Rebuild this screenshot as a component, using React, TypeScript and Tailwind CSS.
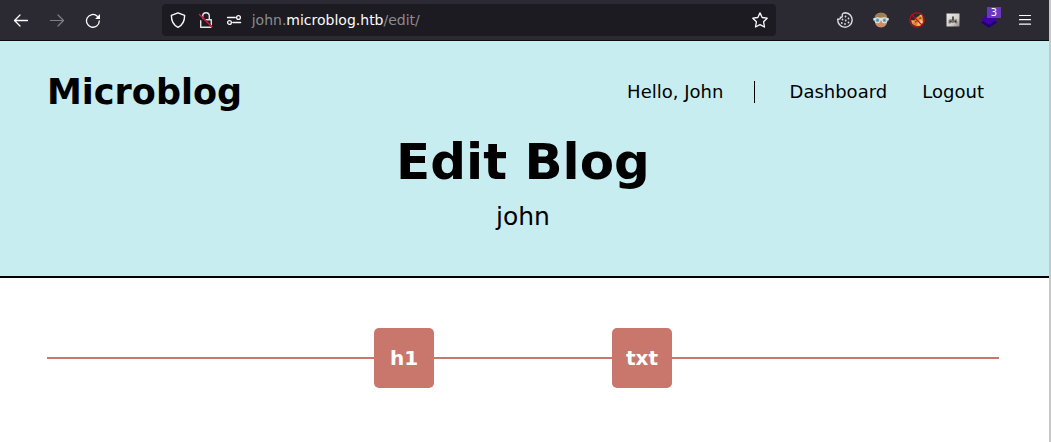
import React from "react";

function BackIcon() {
  return (
    <svg className="h-4 w-4" viewBox="0 0 16 16" fill="none" stroke="#fbfbfe" strokeWidth="1.3" strokeLinecap="round" strokeLinejoin="round">
      <path d="M14.5 8.500H1.700M7 3 1.500 8.500 7 14" />
    </svg>
  );
}

function ForwardIcon() {
  return (
    <svg className="h-4 w-4" viewBox="0 0 16 16" fill="none" stroke="#807f86" strokeWidth="1.2" strokeLinecap="round" strokeLinejoin="round">
      <path d="M1.500 8.500h12.800M9 3 14.500 8.500 9 14" />
    </svg>
  );
}

function ReloadIcon() {
  return (
    <svg className="h-4 w-4" viewBox="0 0 16 16" fill="none" stroke="#fbfbfe" strokeWidth="1.3" strokeLinecap="round">
      <path d="M14.300 9A6.400 6.400 0 1 1 12.300 4.200" />
      <path d="M15 2v4.900h-4.900z" fill="#fbfbfe" stroke="none" />
    </svg>
  );
}

function ShieldIcon() {
  return (
    <svg className="h-4 w-4" viewBox="0 0 16 16" fill="none" stroke="#fbfbfe" strokeWidth="1.4" strokeLinejoin="round">
      <path d="M8 .8 14.6 3.3C14.7 8.5 13.2 12.8 8 15.3 2.8 12.8 1.3 8.5 1.4 3.3z" />
    </svg>
  );
}

function InsecureIcon() {
  return (
    <svg className="h-4 w-4" viewBox="0 0 16 16" fill="none" strokeWidth="1.4">
      <path d="M2.700 8.200v7.100h10.600V7.700H6.500M4.700 7V4a3.300 3.300 0 0 1 6.600 0v3.700" stroke="#e4e4e9" strokeLinejoin="round" />
      <path d="M1 2 14.300 15.300" stroke="#1c1b22" strokeWidth="1.600" />
      <path d="M1 2 14.300 15.300" stroke="#e8143f" strokeWidth="1.400" />
    </svg>
  );
}

function PermissionsIcon() {
  return (
    <svg className="h-4 w-4" viewBox="0 0 16 16" fill="none" stroke="#fbfbfe" strokeWidth="1.3" strokeLinecap="round">
      <path d="M1.5 5.5h7.8M6.8 10.5h7.8" />
      <circle cx="12.5" cy="5.5" r="1.9" />
      <circle cx="3.5" cy="10.5" r="1.9" />
    </svg>
  );
}

function StarIcon() {
  return (
    <svg className="h-4 w-4" viewBox="0 0 16 16" fill="none" stroke="#fbfbfe" strokeWidth="1.3" strokeLinejoin="round">
      <path d="m8 .9 2.2 4.6 5 .7-3.6 3.6.9 5.2L8 12.6 3.5 15l.9-5.2L.8 6.2l5-.7z" />
    </svg>
  );
}

function CookieIcon() {
  return (
    <svg className="h-4 w-4" viewBox="0 0 16 16">
      <path d="M8.500.8A7.200 7.200 0 1 1 .8 7.200c1.600.3 2.800-.3 2.700-1.900C5.100 5.500 5.700 4.400 5.200 3.200 5.100 1.900 6.200.9 8.500.8z" fill="none" stroke="#dcdce0" strokeWidth="1.400" />
      <g fill="#dcdce0">
        <circle cx="8.500" cy="4.500" r=".9" />
        <circle cx="11.500" cy="6.500" r=".9" />
        <circle cx="5.500" cy="7.500" r=".9" />
        <circle cx="8.700" cy="8.500" r=".9" />
        <circle cx="4.800" cy="11" r=".9" />
        <circle cx="8" cy="12" r=".9" />
        <circle cx="11.500" cy="10.500" r=".9" />
      </g>
    </svg>
  );
}

function GogglesIcon() {
  return (
    <svg className="h-4 w-4" viewBox="0 0 16 16">
      <path d="M2 7C2 3 4 .8 8 .8S14 3 14 7v3c0 3-2.500 5.400-6 5.400S2 13 2 10z" fill="#d58b67" />
      <path d="M1.300 7C1.500 2.800 4 .9 8 .9s6.500 1.900 6.700 6.100l-2-1.500-3.200-.7L5 5.300z" fill="#9d8059" />
      <path d="M.3 6h15.400v2.500H.3z" fill="#d7e2e2" />
      <circle cx="4.500" cy="8.200" r="2.500" fill="#78aebb" stroke="#d9e6e8" strokeWidth="1.100" />
      <circle cx="11.500" cy="8.200" r="2.500" fill="#78aebb" stroke="#d9e6e8" strokeWidth="1.100" />
      <path d="M4 8.200h1.300M10.700 8.200H12" stroke="#3a6974" />
    </svg>
  );
}

function BlockedFoxIcon() {
  return (
    <svg className="h-4 w-4" viewBox="0 0 16 16">
      <path d="m2 8 3 .5L8 5l2-1 3-2.500.8 4.500 1 4-3 3.500-4 1L3 12z" fill="#e0852b" />
      <path d="m10 4 3-2 .3 3zM2.500 8.500l3 .6L4 11z" fill="#f2bd75" />
      <path d="m9 10 3-3 2 3-2.500 3.500L8 14z" fill="#f0b878" />
      <path d="m11 10 2-.5-.5 2-1.500 1z" fill="#f7e5d5" />
      <path d="m6 10 1.500-.5M10.500 6.500 12 6" stroke="#4a1e16" />
      <circle cx="8" cy="8" r="7.200" fill="none" stroke="#bd0d15" strokeWidth="1.200" />
      <path d="m3 3 10 10" stroke="#bd0d15" strokeWidth="1.100" />
    </svg>
  );
}

function PortraitIcon() {
  return (
    <svg className="h-[14px] w-[14px]" viewBox="0 0 14 14">
      <defs>
        <linearGradient id="plate" x2="1" y2="1">
          <stop stopColor="#eeebe7" />
          <stop offset=".65" stopColor="#d0cbc4" />
          <stop offset="1" stopColor="#8b8580" />
        </linearGradient>
      </defs>
      <path d="M.5.500h13v13H.500z" fill="url(#plate)" />
      <path d="m2.500 10 .2-3 2.300-1 1 1 .5-3.500h1L8 7l2.500-1 1 4-1.500.7-1.500-1.500-1.500 1-1.500-1L4 10.700z" fill="#77736f" />
      <path d="M7 3.500v3.800M4.200 8.500l1.300.3M9 8l1 1" stroke="#292826" strokeWidth="1.100" />
    </svg>
  );
}

function LayersIcon() {
  return (
    <div className="relative h-4 w-4">
      <svg className="h-4 w-4" viewBox="0 0 16 16">
        <path d="m8 5 8 5.400-8 5.400-8-5.400z" fill="#210078" />
        <path d="m8 1.500 8 5.700-8 5.600-8-5.600z" fill="#4200a6" />
      </svg>
      <span className="absolute -top-[5px] left-[6px] flex h-[11px] w-[14px] items-center justify-center bg-[#6938be] text-[10px] leading-none text-white">
        3
      </span>
    </div>
  );
}

function MenuIcon() {
  return (
    <svg className="h-4 w-4" viewBox="0 0 16 16" stroke="#fbfbfe" strokeWidth="1.200" strokeLinecap="round">
      <path d="M2.500 3.500h11M2.500 7.700h11M2.500 12.200h11" />
    </svg>
  );
}

function BrowserBar() {
  return (
    <div className="flex h-[41px] items-center border-b border-[#0c0c0d] bg-[#2b2a33] pr-4 pl-[13px]">
      <div className="flex gap-5">
        <BackIcon />
        <ForwardIcon />
        <ReloadIcon />
      </div>
      <div className="ml-[61px] flex h-8 w-[614px] items-center rounded bg-[#1c1b22] px-2">
        <div className="flex gap-3">
          <ShieldIcon />
          <InsecureIcon />
          <PermissionsIcon />
        </div>
        <div className="ml-[9.700px] flex-1 text-[14px] leading-5 text-[#8c8b90]">
          john.<span className="text-[#fbfbfe]">microblog.htb</span>/edit/
        </div>
        <StarIcon />
      </div>
      <div className="ml-auto flex items-center gap-5">
        <CookieIcon />
        <GogglesIcon />
        <BlockedFoxIcon />
        <div className="flex w-4 justify-center">
          <PortraitIcon />
        </div>
        <LayersIcon />
        <MenuIcon />
      </div>
    </div>
  );
}

function Header() {
  return (
    <header className="h-[237px] border-b-2 border-black bg-[#c8edf0] pt-[30px] pr-[65px] pl-[47px]">
      <nav className="flex h-[42px] items-center justify-between">
        <div className="text-[35px] leading-[42px] font-bold">Microblog</div>
        <div className="flex items-center text-[18px] leading-[22px]">
          <span>Hello, John</span>
          <span className="ml-[31px] h-[22px] w-px bg-black" />
          <a className="ml-[34.200px]">Dashboard</a>
          <a className="ml-[35.200px]">Logout</a>
        </div>
      </nav>
      <div className="mt-[19px] mr-[-15px] text-center">
        <h1 className="text-[50px] leading-[60px] font-bold">Edit Blog</h1>
        <p className="mt-[10px] text-[25px] leading-[30px]">john</p>
      </div>
    </header>
  );
}

function Editor() {
  return (
    <main className="flex items-center px-[47px] pt-[50px] text-[20px] font-bold text-white">
      <span className="h-[2px] w-[327px] bg-[#c9776d]" />
      <button className="h-[60px] w-[60px] rounded-[5px] bg-[#c9776d]">h1</button>
      <span className="h-[2px] w-[178px] bg-[#c9776d]" />
      <button className="h-[60px] w-[60px] rounded-[5px] bg-[#c9776d]">txt</button>
      <span className="h-[2px] w-[327px] bg-[#c9776d]" />
    </main>
  );
}

export default function App() {
  return (
    <div className="h-[442px] w-[1051px] overflow-hidden border-r-2 border-[#c8c8c8] bg-white font-['DejaVu_Sans',sans-serif] text-black">
      <BrowserBar />
      <Header />
      <Editor />
    </div>
  );
}
